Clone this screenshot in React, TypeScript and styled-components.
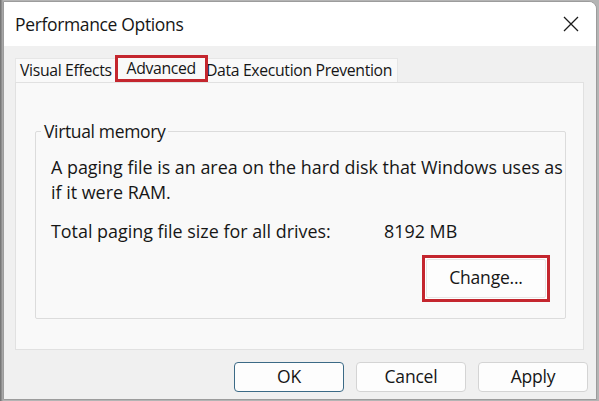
import React from "react";
import styled, { createGlobalStyle } from "styled-components";

const Global = createGlobalStyle`
  html, body { margin: 0; padding: 0; }
  body { background: #a8a8a8; font-family: "Open Sans", "Noto Sans", sans-serif; }
`;

const Screen = styled.div`
  width: 599px;
  height: 401px;
  box-sizing: border-box;
  padding: 1px 2px 1px 3px;
  background: linear-gradient(to right, #6c6c6c 0, #9a9a9a 2px, #b4b4b4 3px);
  display: flex;
`;

const Window = styled.div`
  flex: 1;
  display: flex;
  flex-direction: column;
  background: #f0f0f0;
  border: 1px solid #9c9c9c;
  border-radius: 0 8px 0 0;
  overflow: hidden;
  color: #161616;
  font-size: 17.9px;
`;

const TitleBar = styled.div`
  height: 44px;
  background: #ffffff;
  display: flex;
  align-items: center;
  justify-content: space-between;
  padding: 0 14px 0 11px;
  flex-shrink: 0;
`;

const Title = styled.span`
  font-size: 17.5px;
  letter-spacing: -0.35px;
  line-height: 1;
  padding-top: 1px;
`;

const Close = styled.svg`
  width: 16px;
  height: 16px;
  margin-right: 3px;
  margin-top: -1px;
`;

const Body = styled.div`
  flex: 1;
  display: flex;
  flex-direction: column;
  padding: 9px 8px 0 11px;
`;

const TabStrip = styled.div`
  display: flex;
  align-items: flex-end;
  height: 27px;
  position: relative;
  z-index: 1;
`;

const Tab = styled.div<{ $active?: boolean; $marked?: boolean }>`
  box-sizing: border-box;
  height: ${(p) => (p.$active ? 27 : 24)}px;
  padding: 0 ${(p) => (p.$active ? "9px" : "5px 0 4px")};
  display: flex;
  align-items: center;
  background: #f9f9f9;
  border: ${(p) => (p.$marked ? "3px solid #c4262e" : "1px solid #e6e6e6")};
  border-bottom: ${(p) => (p.$marked ? "3px solid #c4262e" : "none")};
  margin: ${(p) => (p.$active ? "0 -7px 0 -3px" : "0")};
  position: relative;
  z-index: ${(p) => (p.$active ? 2 : 1)};
  font-size: 15.8px;
  letter-spacing: -0.35px;
  line-height: 1;
  white-space: nowrap;
`;

const Panel = styled.div`
  width: 569px;
  height: 268px;
  box-sizing: border-box;
  background: #f9f9f9;
  border: 1px solid #e1e1e1;
  padding: 40px 17px 0 19px;
`;

const Group = styled.fieldset`
  margin: 0;
  box-sizing: border-box;
  height: 196px;
  border: 1px solid #dcdcdc;
  border-radius: 2px;
  padding: 0 0 0 15px;
  display: flex;
  flex-direction: column;
  min-width: 0;
`;

const Legend = styled.legend`
  margin-left: -10px;
  padding: 0 3px;
  line-height: 1;
  font-size: 17.5px;
  letter-spacing: -0.35px;
`;

const Para = styled.p`
  margin: 14px 0 0;
  line-height: 25px;
  white-space: nowrap;
`;

const SizeRow = styled.div`
  display: grid;
  grid-template-columns: 333px auto;
  margin-top: 14px;
  line-height: 25px;
`;

const ButtonRow = styled.div`
  display: flex;
  justify-content: flex-end;
  margin-top: 11px;
  padding-right: 15px;
`;

const Marker = styled.div`
  border: 3px solid #c4262e;
  padding: 1px;
  background: #fff;
`;

const Button = styled.button<{ $primary?: boolean }>`
  box-sizing: border-box;
  width: 110px;
  height: 30px;
  font-family: inherit;
  font-size: 17.5px;
  letter-spacing: -0.2px;
  color: #161616;
  background: #fdfdfd;
  border: 1px solid ${(p) => (p.$primary ? "#3b6a86" : "#d4d4d4")};
  border-radius: 4px;
  padding: 0;
  line-height: 1;
`;

const ChangeButton = styled(Button)`
  width: 120px;
  height: 39px;
  border-color: #e6e6e6;
  border-radius: 2px;
`;

const Footer = styled.div`
  display: flex;
  justify-content: flex-end;
  gap: 12px;
  padding: 12px 0 0;
`;

export default function App() {
  return (
    <>
      <Global />
      <Screen>
        <Window>
          <TitleBar>
            <Title>Performance Options</Title>
            <Close viewBox="0 0 16 16">
              <path d="M1 1 L15 15 M15 1 L1 15" stroke="#1b1b1b" strokeWidth="1.3" fill="none" />
            </Close>
          </TitleBar>
          <Body>
            <TabStrip>
              <Tab>Visual Effects</Tab>
              <Tab $active $marked>Advanced</Tab>
              <Tab>Data Execution Prevention</Tab>
            </TabStrip>
            <Panel>
              <Group>
                <Legend>Virtual memory</Legend>
                <Para>
                  A paging file is an area on the hard disk that Windows uses as
                  <br />
                  if it were RAM.
                </Para>
                <SizeRow>
                  <span>Total paging file size for all drives:</span>
                  <span>8192 MB</span>
                </SizeRow>
                <ButtonRow>
                  <Marker>
                    <ChangeButton>Change...</ChangeButton>
                  </Marker>
                </ButtonRow>
              </Group>
            </Panel>
            <Footer>
              <Button $primary>OK</Button>
              <Button>Cancel</Button>
              <Button>Apply</Button>
            </Footer>
          </Body>
        </Window>
      </Screen>
    </>
  );
}
